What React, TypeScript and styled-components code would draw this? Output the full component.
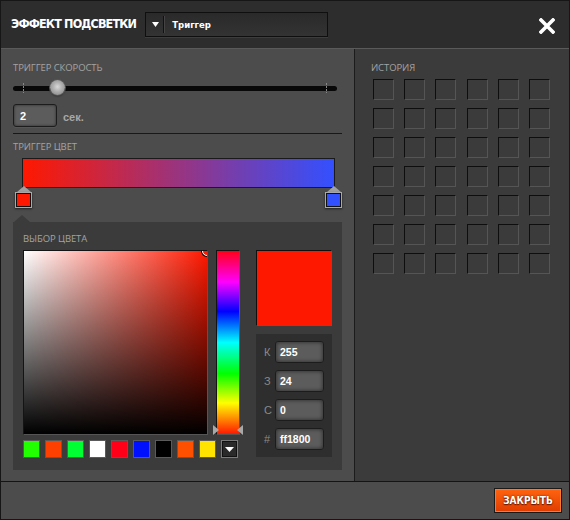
import * as React from "react"
import styled, { createGlobalStyle } from "styled-components"

const GlobalStyle = createGlobalStyle`
  html, body {
    margin: 0;
    padding: 0;
    background: #1a1a1a;
  }
  * {
    box-sizing: border-box;
  }
`

const Window = styled.div`
  width: 570px;
  height: 520px;
  display: flex;
  flex-direction: column;
  border: 1px solid #161616;
  background: #4c4c4c;
  font-family: "Liberation Sans", Arial, sans-serif;
  overflow: hidden;
`

const Header = styled.div`
  height: 48px;
  flex: 0 0 48px;
  display: flex;
  align-items: center;
  padding: 0 14px 0 10px;
  background: #2d2d2d;
  border-bottom: 1px solid #5a5a5a;
`

const Title = styled.div`
  color: #fff;
  font-family: "DejaVu Sans Condensed", "DejaVu Sans", sans-serif;
  font-weight: bold;
  font-size: 12.5px;
  letter-spacing: -0.85px;
  margin-right: 9px;
  margin-top: -2px;
`

const Select = styled.div`
  width: 183px;
  height: 25px;
  margin-top: -1px;
  display: flex;
  align-items: center;
  background: linear-gradient(#2a2a2a, #333333);
  border: 1px solid #0f0f0f;
  box-shadow: 0 1px 0 #3d3d3d;
`

const SelectArrow = styled.div`
  width: 17px;
  height: 17px;
  display: flex;
  align-items: center;
  justify-content: center;
  border-right: 1px solid #111;
  box-shadow: 1px 0 0 #444;
  margin-left: 1px;
`

const SelectText = styled.span`
  color: #fff;
  font-family: "DejaVu Sans Condensed", "DejaVu Sans", sans-serif;
  font-weight: bold;
  font-size: 9.5px;
  margin-left: 8px;
`

const CloseButton = styled.div`
  margin-left: auto;
  width: 16px;
  height: 16px;
  margin-top: 2px;
  display: flex;
`

const Body = styled.div`
  flex: 1;
  display: flex;
  min-height: 0;
`

const LeftPanel = styled.div`
  width: 354px;
  flex: 0 0 354px;
  background: #4c4c4c;
  border-right: 1px solid #1c1c1c;
  padding: 13px 12px 0 12px;
  display: flex;
  flex-direction: column;
`

const RightPanel = styled.div`
  flex: 1;
  background: #3b3b3b;
  padding: 13px 0 0 16px;
`

const Label = styled.div`
  color: #a3a3a3;
  font-family: "Open Sans", "Liberation Sans", sans-serif;
  font-size: 9.5px;
  line-height: 12px;
  height: 12px;
  letter-spacing: -0.1px;
`

const SliderRow = styled.div`
  position: relative;
  height: 16px;
  margin-top: 6px;
  width: 324px;
  display: flex;
  align-items: center;
`

const Track = styled.div`
  width: 100%;
  height: 5px;
  border-radius: 3px;
  background: #080808;
`

const Tick = styled.div<{ $left: number }>`
  position: absolute;
  left: ${(p) => p.$left}px;
  top: 3px;
  width: 1px;
  height: 10px;
  background: repeating-linear-gradient(#888 0 2px, transparent 2px 3px);
`

const Knob = styled.div`
  position: absolute;
  left: 37px;
  top: 0;
  width: 15px;
  height: 15px;
  border-radius: 50%;
  background: radial-gradient(circle at 50% 45%, #d8d8d8 0, #b0b0b0 40%, #7c7c7c 100%);
  box-shadow: 0 0 0 1px #555, 0 1px 2px rgba(0, 0, 0, 0.6);
`

const ValueRow = styled.div`
  display: flex;
  align-items: center;
  margin-top: 8px;
  height: 23px;
`

const NumberBox = styled.div<{ $width: number }>`
  width: ${(p) => p.$width}px;
  height: 100%;
  display: flex;
  align-items: center;
  padding-left: 6px;
  background: #5c5c5c;
  border: 1px solid #1c1c1c;
  border-radius: 3px;
  box-shadow: inset 0 0 3px rgba(0, 0, 0, 0.55), 0 1px 0 #555;
  color: #fff;
  font-family: "Liberation Sans", Arial, sans-serif;
  font-weight: bold;
  font-size: 11px;
`

const Unit = styled.span`
  color: #a8a8a8;
  font-weight: bold;
  font-size: 11px;
  margin-left: 6px;
  margin-top: 2px;
`

const Divider = styled.div`
  height: 1px;
  width: 329px;
  background: #181818;
  margin-top: 6px;
  margin-bottom: 7px;
`

const GradientBar = styled.div`
  margin: 5px 0 0 9px;
  width: 313px;
  height: 30px;
  border: 1px solid #1a1a1a;
  background: linear-gradient(to right, #ff1800, #3350ff);
`

const StopsRow = styled.div`
  position: relative;
  height: 36px;
  margin-top: -2px;
`

const Stop = styled.div<{ $left: number; $color: string }>`
  position: absolute;
  left: ${(p) => p.$left}px;
  top: 0;
  width: 15px;
  height: 22px;
  display: flex;
  flex-direction: column;
  align-items: center;

  &::before {
    content: "";
    width: 0;
    height: 0;
    border-left: 7px solid transparent;
    border-right: 7px solid transparent;
    border-bottom: 6px solid #a0a0a0;
  }

  &::after {
    content: "";
    width: 15px;
    height: 15px;
    background: ${(p) => p.$color};
    border: 1px solid #a8a8a8;
    box-shadow: inset 0 0 0 1px #111, 0 1px 2px rgba(0, 0, 0, 0.6);
  }
`

const PickerPanel = styled.div`
  position: relative;
  width: 329px;
  height: 248px;
  background: #3b3b3b;
  padding: 11px 10px 0 10px;

  &::before {
    content: "";
    position: absolute;
    left: 1px;
    top: -7px;
    border-left: 8px solid transparent;
    border-right: 8px solid transparent;
    border-bottom: 7px solid #3b3b3b;
  }
`

const PickerGrid = styled.div`
  display: flex;
  margin-top: 5px;
`

const PickerLeft = styled.div`
  display: flex;
  flex-direction: column;
`

const PickerTop = styled.div`
  display: flex;
  gap: 8px;
`

const SVField = styled.div`
  position: relative;
  width: 185px;
  height: 185px;
  border: 1px solid #141414;
  border-right-color: #555;
  border-bottom-color: #555;
  overflow: hidden;
  background:
    linear-gradient(to bottom, rgba(0, 0, 0, 0), #000),
    linear-gradient(to right, #fff, rgba(255, 255, 255, 0)),
    #ff1800;
`

const SVCursor = styled.div`
  position: absolute;
  right: -5px;
  top: -5px;
  width: 10px;
  height: 10px;
  border-radius: 50%;
  border: 1px solid #fff;
  box-shadow: 0 0 0 1px #000;
`

const HueColumn = styled.div`
  position: relative;
  width: 24px;
  height: 185px;
`

const HueBar = styled.div`
  width: 24px;
  height: 185px;
  border: 1px solid #141414;
  border-right-color: #555;
  border-bottom-color: #555;
  background: linear-gradient(
    to bottom,
    #ff0018 0%,
    #ff00ff 17%,
    #0000ff 33%,
    #00ffff 50%,
    #00ff00 67%,
    #ffff00 83%,
    #ff1800 100%
  );
`

const HueArrow = styled.div<{ $side: "left" | "right" }>`
  position: absolute;
  bottom: 0;
  ${(p) => (p.$side === "left" ? "left: -3px;" : "right: -3px;")}
  width: 0;
  height: 0;
  border-top: 5px solid transparent;
  border-bottom: 5px solid transparent;
  ${(p) =>
    p.$side === "left"
      ? "border-left: 6px solid #a8a8a8;"
      : "border-right: 6px solid #a8a8a8;"}
`

const Swatches = styled.div`
  display: flex;
  gap: 5px;
  margin-top: 5px;
`

const Swatch = styled.div<{ $color: string }>`
  width: 17px;
  height: 18px;
  background: ${(p) => p.$color};
  border: 1px solid #5a5a5a;
`

const SwatchMenu = styled.div`
  width: 17px;
  height: 18px;
  display: flex;
  align-items: center;
  justify-content: center;
  background: #2a2a2a;
  border: 1px solid #7a7a7a;
  box-shadow: inset 0 0 0 1px #111;
`

const PickerRight = styled.div`
  margin-left: 16px;
  width: 76px;
  display: flex;
  flex-direction: column;
  gap: 8px;
`

const Preview = styled.div`
  width: 76px;
  height: 76px;
  background: #ff1800;
  border: 1px solid #101010;
  border-right-color: #5a5a5a;
  border-bottom-color: #5a5a5a;
`

const Channels = styled.div`
  width: 76px;
  height: 123px;
  background: #2e2e2e;
  padding: 7px 7px 0 8px;
  display: flex;
  flex-direction: column;
  gap: 7px;
`

const ChannelRow = styled.div`
  display: flex;
  align-items: center;
  height: 22px;
`

const ChannelName = styled.span`
  width: 11px;
  color: #8a8a8a;
  font-size: 11px;
`

const FieldBox = styled(NumberBox)`
  font-size: 10.5px;
  padding-left: 4px;
  box-shadow: inset 0 0 4px rgba(0, 0, 0, 0.6);
`

const HistoryGrid = styled.div`
  display: grid;
  grid-template-columns: repeat(6, 21px);
  grid-auto-rows: 21px;
  column-gap: 10.2px;
  row-gap: 8px;
  margin: 5px 0 0 2px;
`

const HistoryCell = styled.div`
  border: 1px solid #0e0e0e;
  border-right-color: #555;
  border-bottom-color: #555;
  background: #3b3b3b;
`

const Footer = styled.div`
  height: 38px;
  flex: 0 0 38px;
  background: #4c4c4c;
  border-top: 1px solid #141414;
  display: flex;
  align-items: center;
  justify-content: flex-end;
  padding-right: 7px;
`

const Button = styled.div`
  width: 68px;
  height: 25px;
  display: flex;
  align-items: center;
  justify-content: center;
  background: linear-gradient(#ff6410, #e03c00);
  border: 1px solid #1a1a1a;
  box-shadow: inset 0 0 0 1px #ff7a30;
  color: #fff;
  font-family: "DejaVu Sans Condensed", "DejaVu Sans", sans-serif;
  font-weight: bold;
  font-size: 10px;
  text-shadow: 0 0 2px #6a1800, 0 1px 1px #6a1800;
`

const swatchColors = [
  "#22ff00",
  "#ff4000",
  "#00ff33",
  "#ffffff",
  "#ff0018",
  "#0010ff",
  "#000000",
  "#ff5000",
  "#ffe400",
]

const channels = [
  { name: "К", value: "255" },
  { name: "З", value: "24" },
  { name: "С", value: "0" },
  { name: "#", value: "ff1800" },
]

export default function App() {
  return (
    <>
      <GlobalStyle />
      <Window>
        <Header>
          <Title>ЭФФЕКТ ПОДСВЕТКИ</Title>
          <Select>
            <SelectArrow>
              <svg width="7" height="5" viewBox="0 0 7 5">
                <path d="M0 0 H7 L3.5 5 Z" fill="#fff" />
              </svg>
            </SelectArrow>
            <SelectText>Триггер</SelectText>
          </Select>
          <CloseButton>
            <svg width="16" height="16" viewBox="0 0 16 16">
              <path
                d="M2 2 L14 14 M14 2 L2 14"
                stroke="#fff"
                strokeWidth="3.6"
                strokeLinecap="square"
              />
            </svg>
          </CloseButton>
        </Header>
        <Body>
          <LeftPanel>
            <Label>ТРИГГЕР СКОРОСТЬ</Label>
            <SliderRow>
              <Track />
              <Tick $left={10} />
              <Tick $left={313} />
              <Knob />
            </SliderRow>
            <ValueRow>
              <NumberBox $width={44}>2</NumberBox>
              <Unit>сек.</Unit>
            </ValueRow>
            <Divider />
            <Label>ТРИГГЕР ЦВЕТ</Label>
            <GradientBar />
            <StopsRow>
              <Stop $left={3} $color="#ff1800" />
              <Stop $left={313} $color="#3350ff" />
            </StopsRow>
            <PickerPanel>
              <Label>ВЫБОР ЦВЕТА</Label>
              <PickerGrid>
                <PickerLeft>
                  <PickerTop>
                    <SVField>
                      <SVCursor />
                    </SVField>
                    <HueColumn>
                      <HueBar />
                      <HueArrow $side="left" />
                      <HueArrow $side="right" />
                    </HueColumn>
                  </PickerTop>
                  <Swatches>
                    {swatchColors.map((c) => (
                      <Swatch key={c} $color={c} />
                    ))}
                    <SwatchMenu>
                      <svg width="9" height="5" viewBox="0 0 9 5">
                        <path d="M0 0 H9 L4.5 5 Z" fill="#fff" />
                      </svg>
                    </SwatchMenu>
                  </Swatches>
                </PickerLeft>
                <PickerRight>
                  <Preview />
                  <Channels>
                    {channels.map((ch) => (
                      <ChannelRow key={ch.name}>
                        <ChannelName>{ch.name}</ChannelName>
                        <FieldBox $width={49}>{ch.value}</FieldBox>
                      </ChannelRow>
                    ))}
                  </Channels>
                </PickerRight>
              </PickerGrid>
            </PickerPanel>
          </LeftPanel>
          <RightPanel>
            <Label>ИСТОРИЯ</Label>
            <HistoryGrid>
              {Array.from({ length: 42 }, (_, i) => (
                <HistoryCell key={i} />
              ))}
            </HistoryGrid>
          </RightPanel>
        </Body>
        <Footer>
          <Button>ЗАКРЫТЬ</Button>
        </Footer>
      </Window>
    </>
  )
}
